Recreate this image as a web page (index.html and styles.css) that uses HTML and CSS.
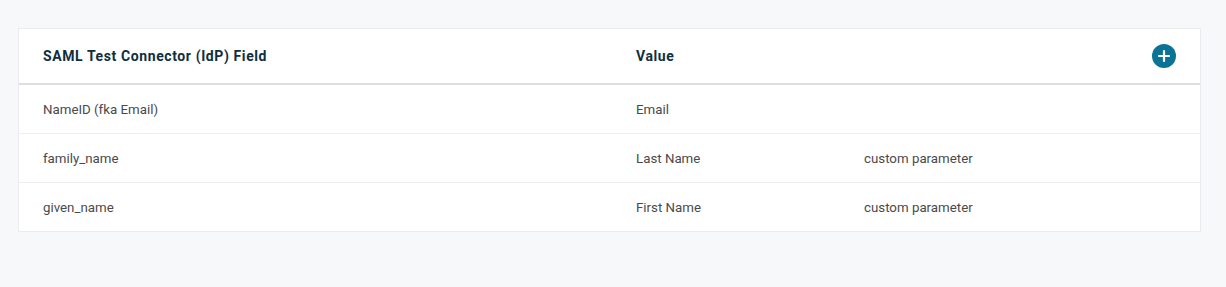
FILE: index.html
```html
<!DOCTYPE html>
<html>
<head>
<meta charset="utf-8">
<link rel="stylesheet" href="styles.css">
</head>
<body>
<div class="page">
  <div class="card">
    <div class="row head">
      <div class="cell">SAML Test Connector (IdP) Field</div>
      <div class="cell">Value</div>
      <div class="cell"></div>
      <div class="cell action">
        <button class="add" aria-label="Add">
          <svg width="24" height="24" viewBox="0 0 24 24"><circle cx="12" cy="12" r="12" fill="#0b7396"/><path d="M12 7v10M7 12h10" stroke="#fff" stroke-width="2.2" stroke-linecap="round"/></svg>
        </button>
      </div>
    </div>
    <div class="row">
      <div class="cell">NameID (fka Email)</div>
      <div class="cell">Email</div>
      <div class="cell"></div>
      <div class="cell"></div>
    </div>
    <div class="row">
      <div class="cell">family_name</div>
      <div class="cell">Last Name</div>
      <div class="cell">custom parameter</div>
      <div class="cell"></div>
    </div>
    <div class="row last">
      <div class="cell">given_name</div>
      <div class="cell">First Name</div>
      <div class="cell">custom parameter</div>
      <div class="cell"></div>
    </div>
  </div>
</div>
</body>
</html>
```

FILE: styles.css
```css
html, body {
  margin: 0;
  padding: 0;
  background: #f7f8fa;
}
body {
  font-family: Roboto, "Liberation Sans", sans-serif;
}
.page {
  padding: 28px 25px 0 18px;
}
.card {
  background: #fff;
  border: 1px solid #e9ebee;
}
.row {
  display: grid;
  grid-template-columns: 593px 228px 1fr 48px;
  align-items: center;
  height: 48px;
  border-bottom: 1px solid #eceef0;
  font-size: 13.3px;
  color: #4a4a4a;
}
.row.last {
  border-bottom: none;
}
.row.head {
  height: 54px;
  border-bottom: 2px solid #dcdee0;
  font-weight: 700;
  font-size: 14px;
  letter-spacing: 0.6px;
  color: #0f2e3d;
}
.cell {
  padding-left: 24px;
}
.cell.action {
  padding-left: 0;
  display: flex;
  justify-content: flex-start;
}
.add {
  border: 0;
  padding: 0;
  margin: 0;
  background: none;
  width: 24px;
  height: 24px;
  display: block;
  cursor: pointer;
}
.add svg {
  display: block;
}
```
